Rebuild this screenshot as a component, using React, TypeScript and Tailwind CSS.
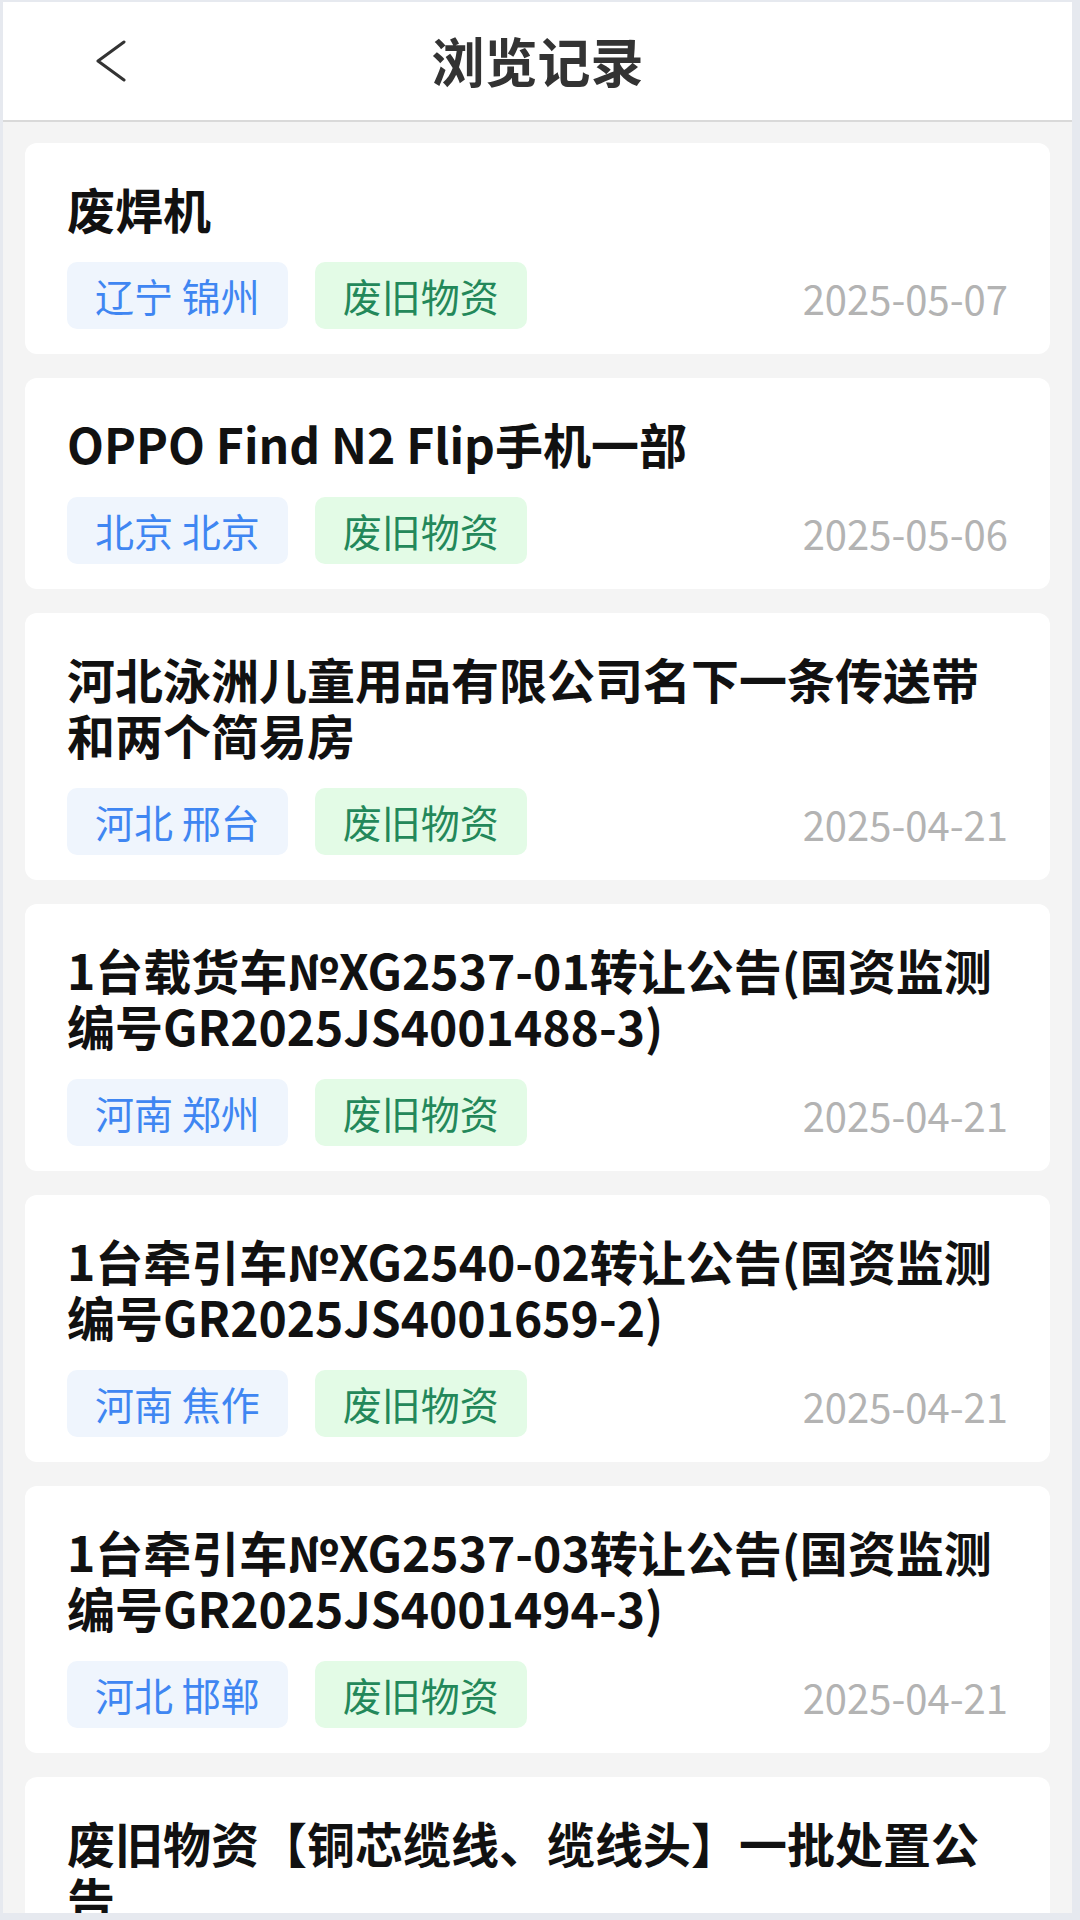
import React from 'react';

type HistoryItem = {
  id: number;
  title: string;
  region: string;
  category: string;
  date: string;
};

const items: HistoryItem[] = [
  { id: 1, title: '废焊机', region: '辽宁 锦州', category: '废旧物资', date: '2025-05-07' },
  { id: 2, title: 'OPPO Find N2 Flip手机一部', region: '北京 北京', category: '废旧物资', date: '2025-05-06' },
  { id: 3, title: '河北泳洲儿童用品有限公司名下一条传送带和两个简易房', region: '河北 邢台', category: '废旧物资', date: '2025-04-21' },
  { id: 4, title: '1台载货车№XG2537-01转让公告(国资监测编号GR2025JS4001488-3)', region: '河南 郑州', category: '废旧物资', date: '2025-04-21' },
  { id: 5, title: '1台牵引车№XG2540-02转让公告(国资监测编号GR2025JS4001659-2)', region: '河南 焦作', category: '废旧物资', date: '2025-04-21' },
  { id: 6, title: '1台牵引车№XG2537-03转让公告(国资监测编号GR2025JS4001494-3)', region: '河北 邯郸', category: '废旧物资', date: '2025-04-21' },
  { id: 7, title: '废旧物资【铜芯缆线、缆线头】一批处置公告', region: '河北 石家庄', category: '废旧物资', date: '2025-04-18' },
];

const font = { fontFamily: '"Noto Sans CJK SC", "Noto Sans", sans-serif' };

function HistoryCard({ item }: { item: HistoryItem }) {
  return (
    <div className="shrink-0 rounded-[12px] bg-white px-[42px] pt-[37px] pb-[25px]">
      <h2 className="text-[48px] leading-[56px] font-bold text-[#111111] break-all">{item.title}</h2>
      <div className="mt-[26px] flex items-center">
        <span className="flex h-[67px] items-center rounded-[10px] bg-[#eff5fd] px-[28px] text-[39px] text-[#3f86f2]">
          {item.region}
        </span>
        <span className="ml-[27px] flex h-[67px] items-center rounded-[10px] bg-[#e3fbe6] px-[28px] text-[39px] text-[#23885a]">
          {item.category}
        </span>
        <span className="ml-auto pt-[4px] text-[40px] text-[#b3b3b3]">{item.date}</span>
      </div>
    </div>
  );
}

export default function App() {
  return (
    <div className="flex h-[1920px] w-[1080px] flex-col overflow-hidden bg-[#e6e9ef] pt-[2px] pr-[8px] pb-[7px] pl-[3px]" style={font}>
      <div className="flex min-h-0 flex-1 flex-col bg-[#f4f4f4]">
        {/* header */}
        <div className="grid h-[120px] shrink-0 grid-cols-[1fr_auto_1fr] items-center border-b-2 border-[#d9d9d9] bg-white">
          <div className="pl-[93px]">
            <svg width="30" height="42" viewBox="0 0 30 42" fill="none">
              <polyline points="28,2 2,21 28,40" stroke="#333333" strokeWidth="3" strokeLinecap="round" strokeLinejoin="round" />
            </svg>
          </div>
          <h1 className="text-[53px] font-bold text-[#333333]">浏览记录</h1>
          <div />
        </div>

        {/* list */}
        <div className="flex min-h-0 flex-1 flex-col gap-[24px] overflow-hidden px-[22px] pt-[21px]">
          {items.map((item) => (
            <HistoryCard key={item.id} item={item} />
          ))}
        </div>
      </div>
    </div>
  );
}
